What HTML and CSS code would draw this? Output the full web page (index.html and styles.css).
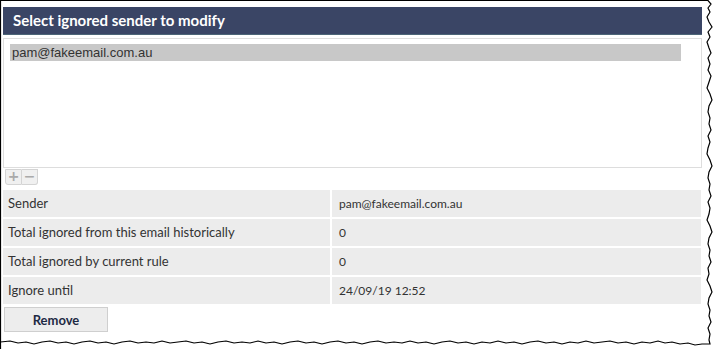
FILE: index.html
```html
<!DOCTYPE html>
<html lang="en">
<head>
    <meta charset="UTF-8">
    <title>Ignored Senders</title>
    <link rel="stylesheet" href="styles.css">
</head>
<body>
    <div class="frame">
        <div class="panel">
            <div class="panel-title">Select ignored sender to modify</div>

            <div class="listbox">
                <div class="list-item selected">pam@fakeemail.com.au</div>
            </div>

            <div class="list-tools">
                <span class="tool-btn">+</span><span class="tool-btn">&minus;</span>
            </div>

            <div class="details">
                <div class="label">Sender</div>
                <div class="value">pam@fakeemail.com.au</div>
                <div class="label">Total ignored from this email historically</div>
                <div class="value">0</div>
                <div class="label">Total ignored by current rule</div>
                <div class="value">0</div>
                <div class="label">Ignore until</div>
                <div class="value">24/09/19 12:52</div>
            </div>

            <button class="remove-btn">Remove</button>
        </div>

        <!-- torn screenshot edge -->
        <svg class="torn-edge" width="716" height="349" viewBox="0 0 716 349">
            <polyline fill="none" stroke="#000" stroke-width="1.2"
                points="0.5,349 0.5,0.5 708,0.5 711,4 708,8 710,12 707,17 709,22 712,27 708,32 710,37 707,42 709,48 711,53 708,58 710,64 708,70 711,76 709,82 707,88 710,94 712,100 709,106 708,112 710,118 709,124 711,130 708,136 710,142 708,148 707,154 710,160 712,166 709,172 708,178 710,184 709,190 711,196 708,202 710,208 709,214 707,220 710,226 712,232 709,238 708,244 710,250 709,256 711,262 708,268 709,274 707,280 710,286 712,292 709,298 708,304 710,310 709,316 711,322 708,328 710,334 709,340 710,344 702,344 695,345 688,343 680,344 672,342 665,343 658,341 650,343 642,342 634,344 626,342 618,343 610,341 602,342 594,343 586,341 578,343 570,342 562,344 554,342 546,343 538,341 530,342 522,344 514,342 506,343 498,341 490,343 482,342 474,344 466,342 458,343 450,341 442,342 434,344 426,342 418,343 410,341 402,343 394,342 386,343 378,341 370,342 362,344 354,342 346,343 338,341 330,342 322,344 314,342 306,343 298,341 290,342 282,344 274,342 266,343 258,341 250,343 242,342 234,343 226,341 218,342 210,344 202,342 194,343 186,341 178,342 170,343 162,341 154,343 146,342 138,343 130,341 122,342 114,344 106,342 98,343 90,341 82,342 74,344 66,342 58,343 50,341 42,342 34,344 26,342 18,343 10,341 0.5,342"/>
        </svg>
    </div>
</body>
</html>
```

FILE: styles.css
```css
body {
    margin: 0;
    background-color: #fff;
    font-family: 'Lato', 'Liberation Sans', sans-serif;
    color: #333;
}

.frame {
    position: relative;
    width: 716px;
    height: 349px;
    overflow: hidden;
}

.panel {
    padding: 7px 0 0 3px;
    width: 699px;
}

.panel-title {
    background-color: #3a4565;
    border-bottom: 1px solid #4c6577;
    color: #fff;
    font-weight: bold;
    font-size: 15px;
    height: 27px;
    line-height: 27px;
    padding-left: 10px;
}

.listbox {
    margin-top: 3px;
    border: 1px solid #ddd;
    height: 123px;
    padding: 5px 20px 0 6px;
}

.list-item {
    font-family: 'Liberation Sans', Arial, sans-serif;
    font-size: 13px;
    height: 17px;
    line-height: 17px;
    padding-left: 2px;
    color: #333;
}

.list-item.selected {
    background-color: #c8c8c8;
}

/* +/- buttons under the list */
.list-tools {
    display: flex;
    margin: 1px 0 0 2px;
}

.tool-btn {
    width: 15px;
    height: 14px;
    line-height: 13px;
    text-align: center;
    font-family: 'DejaVu Sans', sans-serif;
    font-size: 14px;
    font-weight: bold;
    color: #aaa;
    background-color: #f0f0f0;
    border: 1px solid #d4d4d4;
}

.tool-btn:first-child {
    border-radius: 0 0 0 3px;
}

.tool-btn + .tool-btn {
    border-left: none;
    border-radius: 0 0 3px 0;
}

.details {
    display: grid;
    grid-template-columns: 327px 369px;
    grid-auto-rows: 27px;
    gap: 2px;
    margin-top: 5px;
}

.label,
.value {
    background-color: #ececec;
    line-height: 27px;
    padding-left: 5px;
}

.label {
    font-size: 13px;
}

.value {
    font-size: 12px;
    padding-left: 7px;
}

.remove-btn {
    display: block;
    margin: 3px 0 0 1px;
    width: 104px;
    height: 25px;
    background-color: #ededed;
    border: 1px solid #cfcfcf;
    font-family: 'Lato', sans-serif;
    font-weight: bold;
    font-size: 13px;
    color: #1e2a44;
    padding: 0;
}

.torn-edge {
    position: absolute;
    left: 0;
    top: 0;
    pointer-events: none;
}
```
